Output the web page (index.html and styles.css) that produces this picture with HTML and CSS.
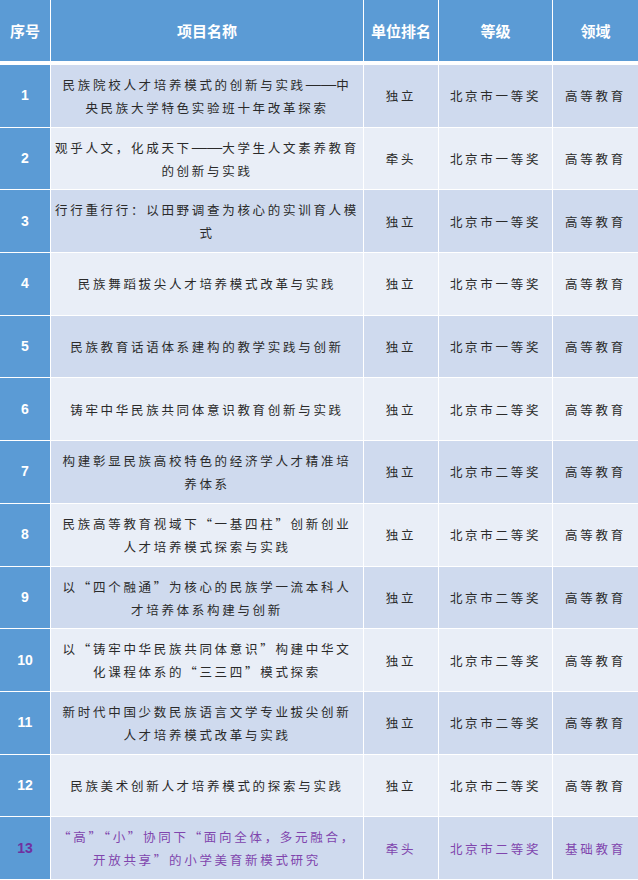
FILE: index.html
```html
<!DOCTYPE html>
<html lang="zh">
<head>
<meta charset="utf-8">
<title>项目列表</title>
<link rel="stylesheet" href="styles.css">
</head>
<body>
<div class="table">
  <div class="row head">
    <div class="cell">序号</div>
    <div class="cell">项目名称</div>
    <div class="cell">单位排名</div>
    <div class="cell">等级</div>
    <div class="cell">领域</div>
  </div>
  <div class="row odd">
    <div class="cell num">1</div>
    <div class="cell name">民族院校人才培养模式的创新与实践<span class="dash">——</span>中<br>央民族大学特色实验班十年改革探索</div>
    <div class="cell">独立</div>
    <div class="cell">北京市一等奖</div>
    <div class="cell">高等教育</div>
  </div>
  <div class="row even">
    <div class="cell num">2</div>
    <div class="cell name">观乎人文，化成天下<span class="dash">——</span>大学生人文素养教育<br>的创新与实践</div>
    <div class="cell">牵头</div>
    <div class="cell">北京市一等奖</div>
    <div class="cell">高等教育</div>
  </div>
  <div class="row odd">
    <div class="cell num">3</div>
    <div class="cell name">行行重行行：以田野调查为核心的实训育人模<br>式</div>
    <div class="cell">独立</div>
    <div class="cell">北京市一等奖</div>
    <div class="cell">高等教育</div>
  </div>
  <div class="row even">
    <div class="cell num">4</div>
    <div class="cell name">民族舞蹈拔尖人才培养模式改革与实践</div>
    <div class="cell">独立</div>
    <div class="cell">北京市一等奖</div>
    <div class="cell">高等教育</div>
  </div>
  <div class="row odd">
    <div class="cell num">5</div>
    <div class="cell name">民族教育话语体系建构的教学实践与创新</div>
    <div class="cell">独立</div>
    <div class="cell">北京市一等奖</div>
    <div class="cell">高等教育</div>
  </div>
  <div class="row even">
    <div class="cell num">6</div>
    <div class="cell name">铸牢中华民族共同体意识教育创新与实践</div>
    <div class="cell">独立</div>
    <div class="cell">北京市二等奖</div>
    <div class="cell">高等教育</div>
  </div>
  <div class="row odd">
    <div class="cell num">7</div>
    <div class="cell name">构建彰显民族高校特色的经济学人才精准培<br>养体系</div>
    <div class="cell">独立</div>
    <div class="cell">北京市二等奖</div>
    <div class="cell">高等教育</div>
  </div>
  <div class="row even">
    <div class="cell num">8</div>
    <div class="cell name">民族高等教育视域下“一基四柱”创新创业<br>人才培养模式探索与实践</div>
    <div class="cell">独立</div>
    <div class="cell">北京市二等奖</div>
    <div class="cell">高等教育</div>
  </div>
  <div class="row odd">
    <div class="cell num">9</div>
    <div class="cell name">以“四个融通”为核心的民族学一流本科人<br>才培养体系构建与创新</div>
    <div class="cell">独立</div>
    <div class="cell">北京市二等奖</div>
    <div class="cell">高等教育</div>
  </div>
  <div class="row even">
    <div class="cell num">10</div>
    <div class="cell name">以“铸牢中华民族共同体意识”构建中华文<br>化课程体系的“三三四”模式探索</div>
    <div class="cell">独立</div>
    <div class="cell">北京市二等奖</div>
    <div class="cell">高等教育</div>
  </div>
  <div class="row odd">
    <div class="cell num">11</div>
    <div class="cell name">新时代中国少数民族语言文学专业拔尖创新<br>人才培养模式改革与实践</div>
    <div class="cell">独立</div>
    <div class="cell">北京市二等奖</div>
    <div class="cell">高等教育</div>
  </div>
  <div class="row even">
    <div class="cell num">12</div>
    <div class="cell name">民族美术创新人才培养模式的探索与实践</div>
    <div class="cell">独立</div>
    <div class="cell">北京市二等奖</div>
    <div class="cell">高等教育</div>
  </div>
  <div class="row odd purple">
    <div class="cell num">13</div>
    <div class="cell name">“高”“小”协同下“面向全体，多元融合，<br>开放共享”的小学美育新模式研究</div>
    <div class="cell">牵头</div>
    <div class="cell">北京市二等奖</div>
    <div class="cell">基础教育</div>
  </div>
</div>
</body>
</html>
```

FILE: styles.css
```css
html, body {
  margin: 0;
  padding: 0;
  background: #ffffff;
}

body {
  width: 638px;
  height: 880px;
  overflow: hidden;
  font-family: "Noto Sans CJK SC", "Noto Sans", sans-serif;
}

.table {
  display: flex;
  flex-direction: column;
}

.row {
  display: grid;
  grid-template-columns: 50px 312px 74px 113px 85px;
  column-gap: 1px;
  height: 61.7px;
  margin-bottom: 1px;
  flex: none;
}

.row.head {
  height: 61px;
  margin-bottom: 4px;
}

.cell {
  display: flex;
  align-items: center;
  justify-content: center;
  text-align: center;
  font-size: 12.5px;
  letter-spacing: 2.7px;
  line-height: 23px;
  color: #2a2a2a;
  white-space: nowrap;
  overflow: hidden;
}

.name {
  display: block;
  padding-top: 8px;
  box-sizing: border-box;
}

.name:not(:has(br)) {
  display: flex;
  padding-top: 0;
}

.dash {
  font-family: "Liberation Sans", Arial, sans-serif;
  font-size: 15.2px;
  letter-spacing: 0;
  line-height: 1;
  position: relative;
  top: -1px;
}

.head .cell {
  background: #5b9bd5;
  color: #ffffff;
  font-weight: bold;
  font-size: 15px;
  letter-spacing: 0;
}

.odd .cell {
  background: #cfdaee;
}

.even .cell {
  background: #e9eef7;
}

.row .cell.num {
  background: #5b9bd5;
  color: #ffffff;
  font-family: "Liberation Sans", Arial, sans-serif;
  font-weight: bold;
  font-size: 14px;
  letter-spacing: 0;
}

.purple .cell.num {
  color: #7030a0;
}

.purple .cell {
  color: #8045ad;
}
```
